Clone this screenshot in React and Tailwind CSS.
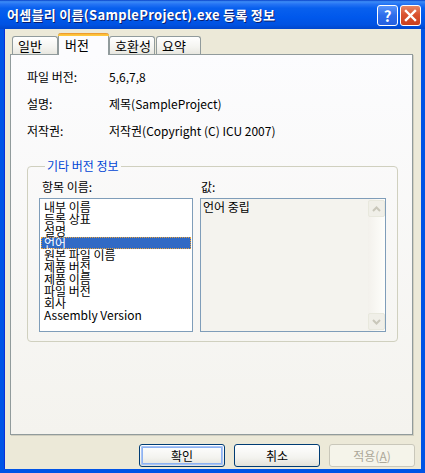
import React from "react"

const items = [
  "내부 이름",
  "등록 상표",
  "설명",
  "언어",
  "원본 파일 이름",
  "제품 버전",
  "제품 이름",
  "파일 버전",
  "회사",
  "Assembly Version",
]

const rows = [
  ["파일 버전:", "5,6,7,8"],
  ["설명:", "제목(SampleProject)"],
  ["저작권:", "저작권(Copyright (C) ICU 2007)"],
]

function TitleBar() {
  return (
    <div className="h-[29px] flex items-center pl-[7px] pr-[4px] bg-[linear-gradient(180deg,#0841C8_0%,#3C8CF7_6%,#2674F4_14%,#0860EE_28%,#0058EC_60%,#0052E2_85%,#0046CC_100%)]">
      <div className="flex-1 text-white font-bold text-[13px] leading-[16px] [text-shadow:1px_1px_0_#0A1E6E] tracking-[0.3px]">
        어셈블리 이름(SampleProject).exe 등록 정보
      </div>
      <div className="flex gap-[2px] mt-[1px]">
        <div className="w-[21px] h-[21px] rounded-[3px] border border-white bg-[linear-gradient(180deg,#5A95FA_0%,#2D6CEB_50%,#2560E0_100%)] flex items-center justify-center text-white font-bold text-[15px] leading-none">
          ?
        </div>
        <div className="w-[21px] h-[21px] rounded-[3px] border border-white bg-[linear-gradient(180deg,#E78766_0%,#DA5330_45%,#C8401E_100%)] flex items-center justify-center">
          <svg width="13" height="13" viewBox="0 0 13 13">
            <path d="M2 2 L11 11 M11 2 L2 11" stroke="white" strokeWidth="2.4" strokeLinecap="square" />
          </svg>
        </div>
      </div>
    </div>
  )
}

function Tab({ label, selected, width }) {
  if (selected) {
    return (
      <div
        className="relative z-10 -mb-px h-[22px] border-x border-[#919B9C] bg-[#FCFCFE] rounded-t-[3px] flex flex-col"
        style={{ width }}
      >
        <div className="h-[3px] rounded-t-[3px] bg-[linear-gradient(180deg,#E68B2C_0%,#FFC73C_60%,#FFC73C_100%)] -mx-px" />
        <div className="flex-1 pl-[6px] pt-[1px] text-[13px] leading-[15px]">{label}</div>
      </div>
    )
  }
  return (
    <div
      className="h-[18px] border-x border-t border-[#919B9C] rounded-t-[3px] bg-[linear-gradient(180deg,#FFFFFF_0%,#F4F4F0_60%,#E8E7E0_100%)] pl-[5px] pt-[1px] text-[13px] leading-[15px]"
      style={{ width }}
    >
      {label}
    </div>
  )
}

function Btn({ children, primary, disabled }) {
  if (disabled) {
    return (
      <div className="w-[86px] h-[23px] rounded-[3px] border border-[#C9C7BA] bg-[#F5F4EA] flex items-center justify-center text-[#ACA899] text-[12px]">
        {children}
      </div>
    )
  }
  return (
    <div className="w-[86px] h-[23px] rounded-[3px] border border-[#003C74] bg-[linear-gradient(180deg,#FFFFFF_0%,#F3F3EF_60%,#E3E2DA_100%)] flex items-center justify-center p-px">
      <div
        className={
          "w-full h-full rounded-[2px] flex items-center justify-center text-[12px] " +
          (primary ? "shadow-[inset_0_0_0_1px_#A9C4F5,inset_0_0_0_2px_#8DB2F1]" : "")
        }
      >
        {children}
      </div>
    </div>
  )
}

export default function App() {
  return (
    <div className="w-[425px] h-[473px] flex flex-col bg-[#0054E6] font-['Noto_Sans_CJK_KR','Noto_Sans',sans-serif] text-black">
      <TitleBar />
      <div className="flex-1 mx-[4px] mb-[4px] border-l border-[#0831D9] bg-[#ECE9D8] flex flex-col">
        <div className="flex items-end ml-[7px] mt-[4px] h-[21px]">
          <Tab label="일반" width={46} />
          <Tab label="버전" selected width={51} />
          <Tab label="호환성" width={46} />
          <div className="w-px" />
          <Tab label="요약" width={45} />
        </div>

        <div className="ml-[5px] w-[403px] h-[381px] border border-[#919B9C] shadow-[1px_1px_0_#D0CEBF] bg-[linear-gradient(180deg,#FCFCFE_0%,#F4F3EE_100%)] flex flex-col">
          <div className="pt-[8px]">
            {rows.map(([k, v]) => (
              <div key={k} className="h-[27px] flex items-center text-[12px]">
                <div className="w-[98px] pl-[16px]">{k}</div>
                <div>{v}</div>
              </div>
            ))}
          </div>

          <fieldset className="mt-[16px] ml-[16px] w-[370px] border border-[#D0D0BF] rounded-[4px] px-[11px] pb-[9px]">
            <legend className="ml-[6px] px-[2px] text-[12px] leading-[12px] text-[#0046D5]">기타 버전 정보</legend>
            <div className="grid grid-cols-[154px_186px] gap-x-[7px] mt-[9px]">
              <div className="pl-[3px] text-[12px] leading-[12px] mb-[5px]">항목 이름:</div>
              <div className="pl-[1px] text-[12px] leading-[12px] mb-[5px]">값:</div>
              <div className="h-[134px] border border-[#7F9DB9] bg-white p-px pt-[2px]">
                {items.map((it) => (
                  <div
                    key={it}
                    className={
                      "h-[12px] pl-[3px] text-[12px] leading-[12px] whitespace-nowrap " +
                      (it === "언어" ? "bg-[#316AC5] text-white outline outline-1 outline-dotted outline-[#E8A33C] -outline-offset-1" : "")
                    }
                  >
                    {it}
                  </div>
                ))}
              </div>
              <div className="h-[134px] border border-[#7F9DB9] bg-[#F4F3EE] flex">
                <div className="flex-1 pl-[2px] pt-[2px] text-[12px] leading-[12px]">언어 중립</div>
                <div className="w-[17px] flex flex-col bg-[linear-gradient(90deg,#F3F1EC_0%,#FEFEFB_100%)] py-px">
                  <div className="h-[17px] rounded-[2px] border border-[#E8E8DD] bg-[#F0EFE8] flex items-center justify-center">
                    <svg width="9" height="6" viewBox="0 0 9 6">
                      <path d="M1 5 L4.5 1.5 L8 5" fill="none" stroke="#C9C7BA" strokeWidth="2" />
                    </svg>
                  </div>
                  <div className="flex-1" />
                  <div className="h-[17px] rounded-[2px] border border-[#E8E8DD] bg-[#F0EFE8] flex items-center justify-center">
                    <svg width="9" height="6" viewBox="0 0 9 6">
                      <path d="M1 1 L4.5 4.5 L8 1" fill="none" stroke="#C9C7BA" strokeWidth="2" />
                    </svg>
                  </div>
                </div>
              </div>
            </div>
          </fieldset>
        </div>

        <div className="flex justify-end gap-[9px] pr-[6px] mt-[9px]">
          <Btn primary>확인</Btn>
          <Btn>취소</Btn>
          <Btn disabled>
            <span>
              적용(<span className="underline">A</span>)
            </span>
          </Btn>
        </div>
      </div>
    </div>
  )
}
